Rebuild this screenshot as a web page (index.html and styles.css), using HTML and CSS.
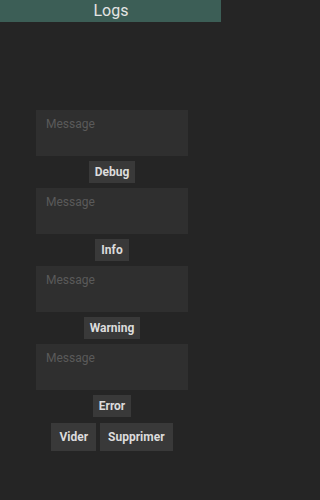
FILE: index.html
```html
<!DOCTYPE html>
<html>
<head>
<meta charset="utf-8">
<link rel="stylesheet" href="styles.css">
</head>
<body>
<div class="page">
<header class="header">Logs</header>
<main class="content">
  <textarea class="msg" placeholder="Message"></textarea>
  <button class="btn">Debug</button>
  <textarea class="msg" placeholder="Message"></textarea>
  <button class="btn">Info</button>
  <textarea class="msg" placeholder="Message"></textarea>
  <button class="btn">Warning</button>
  <textarea class="msg" placeholder="Message"></textarea>
  <button class="btn">Error</button>
  <div class="actions">
    <button class="btn btn-lg">Vider</button>
    <button class="btn btn-lg">Supprimer</button>
  </div>
</main>
</div>
</body>
</html>
```
FILE: styles.css
```css
html, body {
  margin: 0;
  padding: 0;
  background: #252525;
  height: 100%;
  font-family: Roboto, "Liberation Sans", sans-serif;
}
.page {
  width: 221px;
  height: 100%;
  overflow: hidden;
}
.header {
  height: 22px;
  line-height: 22px;
  background: #3c5e56;
  color: #e4e4e4;
  text-align: center;
  font-size: 16px;
  padding-left: 1px;
}
.content {
  display: flex;
  flex-direction: column;
  align-items: center;
  gap: 5px;
  padding-top: 88px;
  padding-left: 3px;
}
.msg {
  box-sizing: border-box;
  width: 152px;
  height: 46px;
  margin: 0;
  background: #2f2f2f;
  border: none;
  outline: none;
  resize: none;
  padding: 7px 10px;
  font-family: Roboto, "Liberation Sans", sans-serif;
  font-size: 12px;
  color: #ccc;
}
.msg::placeholder {
  color: #5a5a5a;
}
.btn {
  box-sizing: border-box;
  height: 22px;
  padding: 0 6px;
  margin: 0;
  background: #393939;
  border: none;
  color: #dcdcdc;
  font-family: Roboto, "Liberation Sans", sans-serif;
  font-weight: bold;
  font-size: 12px;
}
.actions {
  display: flex;
  gap: 4px;
  margin-top: 1px;
}
.btn-lg {
  height: 28px;
  padding: 0 8px;
}
```
